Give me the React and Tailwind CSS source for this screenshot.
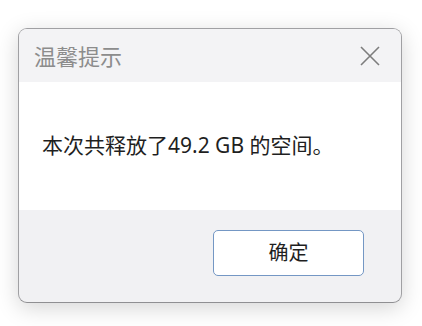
export default function App() {
  const font = { fontFamily: '"Noto Sans", "Noto Sans CJK SC", sans-serif' };
  return (
    <div className="w-[422px] h-[326px] bg-white pt-[28px] pl-[18px]" style={font}>
      <div className="w-[384px] h-[275px] rounded-[9px] border border-[#a0a0a3] border-b-[#8f8f92] bg-[#f1f1f3] overflow-hidden flex flex-col shadow-[0_5px_22px_rgba(0,0,0,0.17)]">
        <div className="h-[53px] bg-[#f3f3f5] flex items-center justify-between pl-[15px] pr-[21px]">
          <span className="text-[22px] leading-none text-[#8c8c8c]">温馨提示</span>
          <svg width="20" height="20" viewBox="0 0 20 20" className="text-[#7d7d7d]">
            <path d="M1 1 L19 19 M19 1 L1 19" stroke="currentColor" strokeWidth="1.6" fill="none" />
          </svg>
        </div>
        <div className="h-[128px] bg-white flex items-center pl-[23px]">
          <span className="text-[21px] leading-none text-[#1f1f1f] -mt-[1px]">本次共释放了49.2 GB 的空间。</span>
        </div>
        <div className="flex-1 flex justify-end items-start pt-[20px] pr-[37px]">
          <button className="w-[151px] h-[46px] rounded-[5px] border border-[#7497c4] bg-white text-[20px] text-[#1f1f1f] flex items-center justify-center">
            确定
          </button>
        </div>
      </div>
    </div>
  );
}
